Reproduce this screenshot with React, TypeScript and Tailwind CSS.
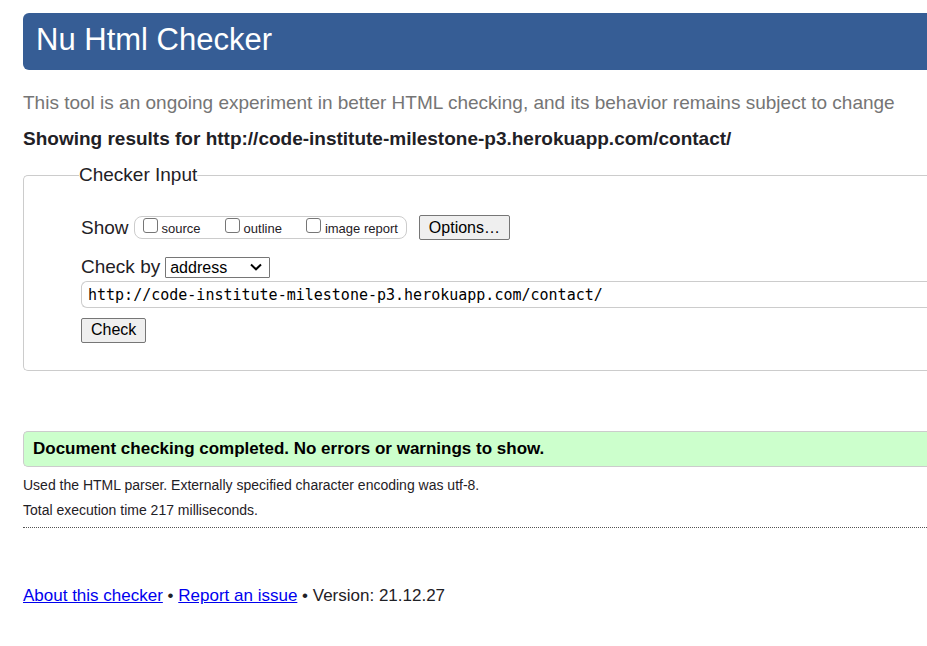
import { useState } from "react";

const DOCUMENT_URL = "http://code-institute-milestone-p3.herokuapp.com/contact/";

function ShowOption({ id, label }: { id: string; label: string }) {
  return (
    <span className="flex gap-1">
      <input
        id={id}
        type="checkbox"
        className="mt-px size-[15px] appearance-none rounded-[3px] border border-[#767676] bg-white checked:bg-[#0075ff]"
      />
      <label htmlFor={id} className="pt-px text-[13px] leading-[21px]">
        {label}
      </label>
    </span>
  );
}

function CheckerForm() {
  const [url, setUrl] = useState(DOCUMENT_URL);
  const [method, setMethod] = useState("address");

  return (
    <form onSubmit={(event) => event.preventDefault()}>
      <fieldset className="rounded-l-[5px] border border-r-0 border-[#ccc] pb-[27px] pl-[57px]">
        <legend className="-ml-0.5 text-[19px] leading-[26px]">Checker Input</legend>
        <div className="mt-[27px] flex items-center text-[19px] leading-6">
          <span id="show-label">Show</span>
          <div
            role="group"
            aria-labelledby="show-label"
            className="ml-[5px] flex h-[23px] gap-6 rounded-[8px] border border-[#ccc] px-2"
          >
            <ShowOption id="show-source" label="source" />
            <ShowOption id="show-outline" label="outline" />
            <ShowOption id="show-image-report" label="image report" />
          </div>
          <button
            type="button"
            className="ml-3 h-[25px] rounded-[2px] border border-[#767676] bg-[#efefef] px-[9px] text-base leading-[23px] text-black"
          >
            Options…
          </button>
        </div>
        <div className="mt-[15px] flex items-center gap-[5px] text-[19px] leading-6">
          <label htmlFor="method">Check by</label>
          <span className="grid items-center">
            <select
              id="method"
              value={method}
              onChange={(event) => setMethod(event.target.value)}
              className="col-start-1 row-start-1 h-[21px] w-[105px] appearance-none rounded-[1px] border border-[#767676] bg-white pl-1 text-base leading-[19px] text-black"
            >
              <option>address</option>
              <option>file upload</option>
              <option>text input</option>
            </select>
            <svg
              aria-hidden="true"
              viewBox="0 0 12 8"
              className="pointer-events-none col-start-1 row-start-1 mr-2 h-2 w-3 justify-self-end"
            >
              <path d="M1 1.5 L6 6.3 L11 1.5" fill="none" stroke="black" strokeWidth="2" />
            </svg>
          </span>
        </div>
        <input
          type="url"
          aria-label="Address"
          value={url}
          onChange={(event) => setUrl(event.target.value)}
          className="mt-0.5 block h-[27px] w-full rounded-l-[6px] border border-r-0 border-[#ccc] bg-white pl-1.5 font-['DejaVu_Sans_Mono',monospace] text-[15px] text-black"
        />
        <button
          type="submit"
          className="mt-2.5 block h-[25px] rounded-[2px] border border-[#767676] bg-[#efefef] px-[9px] pb-0.5 text-base leading-[21px] text-black"
        >
          Check
        </button>
      </fieldset>
    </form>
  );
}

export default function App() {
  return (
    <div className="min-h-screen bg-white pt-[13px] pb-10 pl-[23px] font-['Liberation_Sans',Arial,sans-serif] text-[#1f2126]">
      <header>
        <h1 className="rounded-l-[6px] bg-[#365d95] px-[13px] pt-[9px] pb-3 text-[31px] leading-9 text-white">
          Nu Html Checker
        </h1>
        <p className="mt-[21px] text-[19px] leading-6 text-[#757575]">
          This tool is an ongoing experiment in better HTML checking, and its behavior remains subject to change
        </p>
      </header>
      <main>
        <h2 className="mt-3 mb-[11px] text-[19px] leading-6 font-bold">
          Showing results for {DOCUMENT_URL}
        </h2>
        <CheckerForm />
        <p className="mt-[60px] rounded-l-[5px] border border-r-0 border-[#ccc] bg-[#ccffcc] px-[9px] py-[5px] text-[17px] leading-6 font-bold text-black">
          Document checking completed. No errors or warnings to show.
        </p>
        <div className="border-b border-dotted border-[#555] pt-1.5 pb-1 text-sm leading-[25px]">
          <p>Used the HTML parser. Externally specified character encoding was utf-8.</p>
          <p>Total execution time 217 milliseconds.</p>
        </div>
      </main>
      <footer className="mt-14 text-[17px] leading-6">
        <a href="#about" className="text-[#0000ee] underline">About this checker</a>
        {" • "}
        <a href="#issues" className="text-[#0000ee] underline">Report an issue</a>
        {" • Version: 21.12.27"}
      </footer>
    </div>
  );
}
